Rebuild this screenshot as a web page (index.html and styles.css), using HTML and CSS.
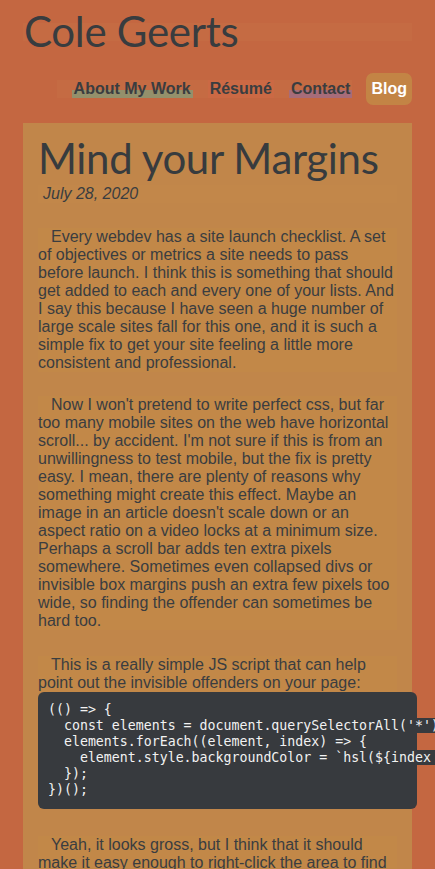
FILE: index.html
```html
<!DOCTYPE html>
<html lang="en">
<head>
<meta charset="utf-8">
<title>Mind your Margins - Cole Geerts</title>
<link rel="stylesheet" href="styles.css">
</head>
<body>
<div class="page">
  <header class="site-header">
    <h1 class="site-title"><span class="site-title-text">Cole Geerts</span></h1>
    <nav class="site-nav">
      <ul class="nav-list">
        <li><a class="nav-link nav-work" href="#">About My Work</a></li>
        <li><a class="nav-link nav-resume" href="#">Résumé</a></li>
        <li><a class="nav-link nav-contact" href="#">Contact</a></li>
      </ul>
      <a class="nav-blog" href="#">Blog</a>
    </nav>
  </header>
  <main class="card">
    <h2 class="post-title">Mind your Margins</h2>
    <p class="post-date">July 28, 2020</p>
    <p class="para">Every webdev has a site launch checklist. A set of objectives or metrics a site needs to pass before launch. I think this is something that should get added to each and every one of your lists. And I say this because I have seen a huge number of large scale sites fall for this one, and it is such a simple fix to get your site feeling a little more consistent and professional.</p>
    <p class="para">Now I won't pretend to write perfect css, but far too many mobile sites on the web have horizontal scroll... by accident. I'm not sure if this is from an unwillingness to test mobile, but the fix is pretty easy. I mean, there are plenty of reasons why something might create this effect. Maybe an image in an article doesn't scale down or an aspect ratio on a video locks at a minimum size. Perhaps a scroll bar adds ten extra pixels somewhere. Sometimes even collapsed divs or invisible box margins push an extra few pixels too wide, so finding the offender can sometimes be hard too.</p>
    <p class="para para-tight">This is a really simple JS script that can help point out the invisible offenders on your page:</p>
    <pre class="code-block"><code class="code">(() =&gt; {
  const elements = document.querySelectorAll('*');
  elements.forEach((element, index) =&gt; {
    element.style.backgroundColor = `hsl(${index * 10}, 50%, 50%)`;
  });
})();</code></pre>
    <p class="para para-after">Yeah, it looks gross, but I think that it should make it easy enough to right-click the area to find the element that is causing the trouble and fix it.</p>
  </main>
</div>
</body>
</html>
```

FILE: styles.css
```css
html, body {
  margin: 0;
  padding: 0;
}

body {
  background: #c46741;
  color: #3a3d40;
  font-family: "Liberation Sans", Arial, sans-serif;
  font-size: 16px;
}

.page {
  padding: 0 23px;
}

.site-header {
  display: flex;
  flex-direction: column;
}

.site-title {
  margin: 23px 0 0;
  height: 18px;
  line-height: 18px;
  background: #c56b43;
  font-family: Lato, "Open Sans", sans-serif;
  font-weight: 400;
  font-size: 42px;
  letter-spacing: -0.3px;
  color: #383c3f;
}

.site-title-text {
  position: relative;
  top: -1px;
  left: 1px;
}

.site-nav {
  display: flex;
  justify-content: flex-end;
  align-items: center;
  margin-top: 32px;
}

.nav-list {
  display: flex;
  gap: 15px;
  list-style: none;
  margin: 0 14px 0 0;
  padding: 0 0 0 15px;
  background: #c56b43;
  line-height: 18px;
}

.nav-link {
  display: block;
  padding: 0 2px;
  font-weight: 700;
  color: #3a3d40;
  text-decoration: none;
}

.nav-work {
  background: linear-gradient(to bottom, transparent 55%, #94906b 55%);
}

.nav-resume {
  background: #cb6944;
}

.nav-contact {
  background: linear-gradient(to bottom, transparent 55%, #a76c79 55%);
}

.nav-blog {
  display: block;
  padding: 7px 5px;
  line-height: 18px;
  border-radius: 7px;
  background: #c38445;
  color: #ffffff;
  font-weight: 700;
  text-decoration: none;
}

.card {
  display: block;
  margin-top: 18px;
  padding: 8px 15px 20px;
  background: #c1864a;
}

.post-title {
  margin: 0;
  font-family: Lato, "Open Sans", sans-serif;
  font-weight: 400;
  font-size: 42px;
  letter-spacing: -0.35px;
  line-height: 54px;
  color: #373b3e;
}

.post-date {
  margin: 0;
  padding-left: 5px;
  line-height: 18px;
  font-style: italic;
  background: #c2874a;
}

.para {
  margin: 25px 0 0;
  line-height: 18px;
  text-indent: 13px;
  background: #c28848;
}

.para + .para {
  margin-top: 24px;
}

.para + .para-tight {
  margin-top: 26px;
  margin-bottom: 0;
}

.code-block {
  margin: 0 -20px 0 0;
  padding: 10px 10px 11px;
  background: #373a3e;
  border-radius: 6px;
  color: #f2f2f2;
  font-family: "DejaVu Sans Mono", monospace;
  font-size: 13.25px;
  line-height: 16px;
  white-space: pre;
  overflow: visible;
}

.code {
  background: #373a3e;
  font-family: inherit;
}

.para-after {
  margin-top: 27px;
}
```
